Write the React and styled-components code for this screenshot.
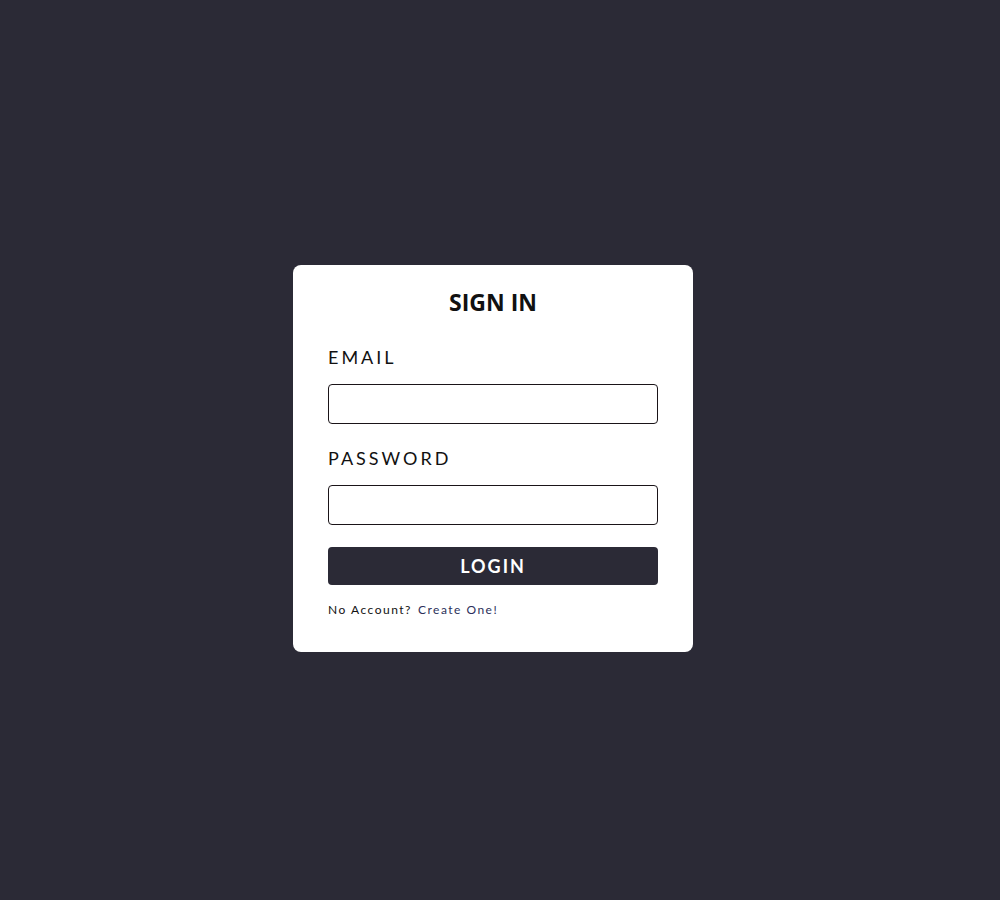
import React from "react";
import styled, { createGlobalStyle } from "styled-components";

const Global = createGlobalStyle`
  html, body { margin: 0; padding: 0; background: #2b2a36; }
  * { box-sizing: border-box; }
`;

const Page = styled.div`
  min-height: 900px;
  display: flex;
  justify-content: center;
  align-items: flex-start;
  padding-top: 265px;
  padding-right: 14px;
  background: #2b2a36;
`;

const Card = styled.form`
  width: 400px;
  height: 387px;
  background: #ffffff;
  border-radius: 8px;
  padding: 22px 35px 0 35px;
  display: flex;
  flex-direction: column;
`;

const Title = styled.h1`
  margin: 0 0 29px 0;
  text-align: center;
  font-family: "Open Sans", sans-serif;
  font-weight: 700;
  font-size: 23px;
  line-height: 30px;
  letter-spacing: 0;
  color: #111;
`;

const Label = styled.label`
  font-family: "Lato", sans-serif;
  font-size: 18px;
  line-height: 22px;
  letter-spacing: 3px;
  color: #111;
  margin-bottom: 16px;
`;

const Input = styled.input`
  width: 330px;
  height: 40px;
  border: 1px solid #1a1418;
  border-radius: 4px;
  margin-bottom: 23px;
  outline: none;
`;

const Button = styled.button`
  width: 330px;
  height: 38px;
  margin-top: -1px;
  border: none;
  border-radius: 4px;
  background: #2b2a36;
  color: #ffffff;
  font-family: "Lato", sans-serif;
  font-weight: 700;
  font-size: 18px;
  letter-spacing: 2px;
  cursor: pointer;
`;

const Footer = styled.p`
  margin: 17px 0 0 0;
  font-family: "Lato", sans-serif;
  font-size: 12px;
  line-height: 16px;
  letter-spacing: 1.5px;
  color: #111;
`;

const Link = styled.a`
  margin-left: 6px;
  color: #2b2f5a;
  text-decoration: none;
`;

export default function App() {
  return (
    <>
      <Global />
      <Page>
        <Card onSubmit={(e) => e.preventDefault()}>
          <Title>SIGN IN</Title>
          <Label htmlFor="email">EMAIL</Label>
          <Input id="email" type="email" />
          <Label htmlFor="password">PASSWORD</Label>
          <Input id="password" type="password" />
          <Button type="submit">LOGIN</Button>
          <Footer>
            No Account?<Link href="#">Create One!</Link>
          </Footer>
        </Card>
      </Page>
    </>
  );
}
